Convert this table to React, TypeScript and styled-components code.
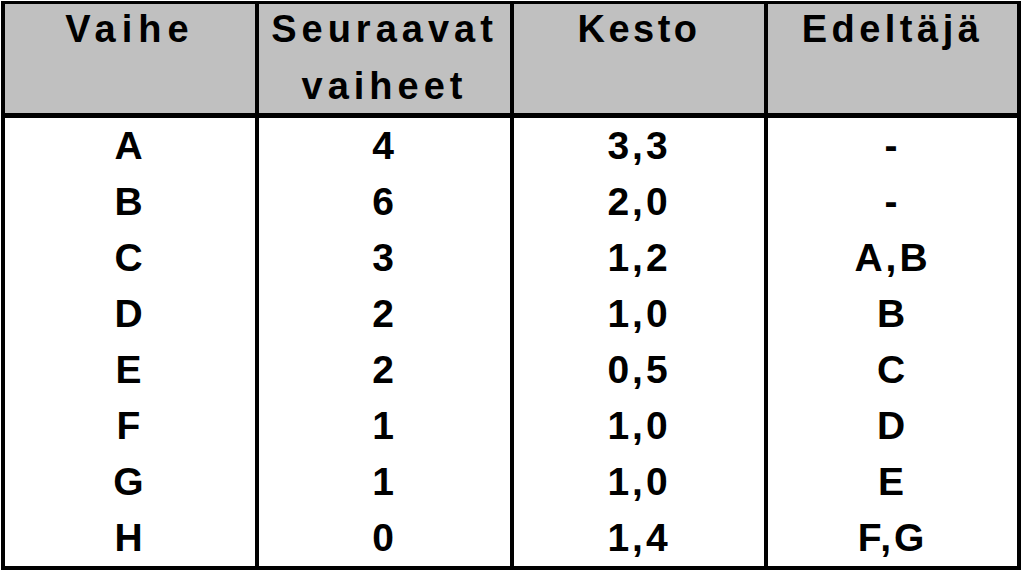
import React from "react";
import styled, { createGlobalStyle } from "styled-components";

const GlobalStyle = createGlobalStyle`
  html, body {
    margin: 0;
    padding: 0;
    background: #ffffff;
  }
  body {
    font-family: "Liberation Sans", Arial, sans-serif;
    color: #000;
  }
`;

const Table = styled.div`
  margin: 1px 0 0 1px;
  width: 1020px;
  border: 4px solid #000;
  border-top-width: 3px;
  box-sizing: border-box;
  display: grid;
  grid-template-columns: 250px 255px 254px 253px;
  grid-template-rows: 114px repeat(8, 56px);
  font-weight: bold;
`;

const HeadCell = styled.div<{ $first?: boolean; $spacing: number }>`
  background: #c0c0c0;
  border-left: ${({ $first }) => ($first ? "0" : "4px solid #000")};
  border-bottom: 5px solid #000;
  font-size: 38px;
  line-height: 57px;
  letter-spacing: ${({ $spacing }) => $spacing}px;
  text-align: center;
  overflow: hidden;
  white-space: nowrap;
`;

const HeadText = styled.div`
  margin-top: -3px;
`;

const Cell = styled.div<{ $first?: boolean }>`
  border-left: ${({ $first }) => ($first ? "0" : "4px solid #000")};
  font-size: 39px;
  line-height: 56px;
  letter-spacing: 3px;
  text-align: center;
  white-space: nowrap;
`;

const headers: { lines: string[]; spacing: number }[] = [
  { lines: ["Vaihe"], spacing: 6 },
  { lines: ["Seuraavat", "vaiheet"], spacing: 5 },
  { lines: ["Kesto"], spacing: 3.5 },
  { lines: ["Edeltäjä"], spacing: 4.5 },
];

const rows = [
  ["A", "4", "3,3", "-"],
  ["B", "6", "2,0", "-"],
  ["C", "3", "1,2", "A,B"],
  ["D", "2", "1,0", "B"],
  ["E", "2", "0,5", "C"],
  ["F", "1", "1,0", "D"],
  ["G", "1", "1,0", "E"],
  ["H", "0", "1,4", "F,G"],
];

export default function App() {
  return (
    <>
      <GlobalStyle />
      <Table>
        {headers.map((h, i) => (
          <HeadCell key={i} $first={i === 0} $spacing={h.spacing}>
            <HeadText>
              {h.lines.map((l) => (
                <div key={l}>{l}</div>
              ))}
            </HeadText>
          </HeadCell>
        ))}
        {rows.map((r, ri) =>
          r.map((v, ci) => (
            <Cell key={`${ri}-${ci}`} $first={ci === 0}>
              {v}
            </Cell>
          ))
        )}
      </Table>
    </>
  );
}
